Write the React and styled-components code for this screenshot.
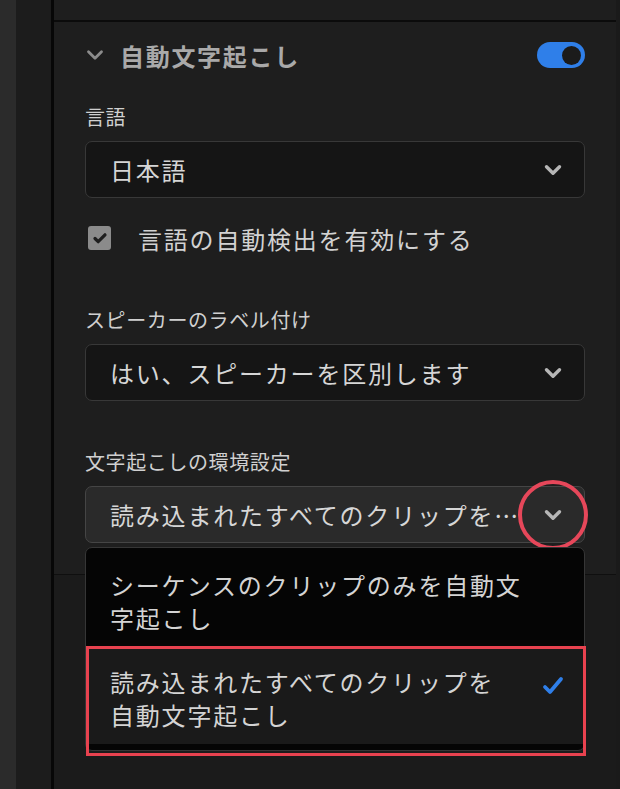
import React from 'react';
import styled, { createGlobalStyle } from 'styled-components';

const GlobalStyle = createGlobalStyle`
  html, body {
    margin: 0;
    padding: 0;
    background: #1e1e1e;
  }
  body {
    font-family: "Noto Sans CJK JP", "Noto Sans", sans-serif;
    -webkit-font-smoothing: antialiased;
  }
`;

const Screen = styled.div`
  display: flex;
  width: 620px;
  height: 789px;
  overflow: hidden;
  background: #1e1e1e;
`;

const SideStrip = styled.div`
  width: 16px;
  background: #2b2b2b;
`;

const Gutter = styled.div`
  width: 35px;
  background: #1c1c1c;
`;

const Divider = styled.div`
  width: 3px;
  background: #070707;
`;

const Panel = styled.div`
  flex: 1;
  display: flex;
  flex-direction: column;
  border-right: 4px solid #1a1a1a;
`;

const TopBand = styled.div`
  height: 20px;
  background: #1e1e1e;
  border-bottom: 2px solid #0b0b0b;
`;

const Section = styled.section`
  position: relative;
  padding: 0 31px 31px 31px;
  background: #1e1e1e;
  border-bottom: 1px solid #0f0f0f;
`;

const Rest = styled.div`
  flex: 1;
  background: #1b1b1b;
`;

const Header = styled.div`
  display: flex;
  align-items: center;
  height: 66px;
`;

const Title = styled.h2`
  flex: 1;
  margin: 0 0 0 15px;
  font-size: 24px;
  font-weight: 700;
  letter-spacing: 1.7px;
  color: #a9a9a9;
`;

const Toggle = styled.div`
  display: flex;
  align-items: center;
  justify-content: flex-end;
  width: 48px;
  height: 26px;
  padding: 0 4px;
  box-sizing: border-box;
  border-radius: 13px;
  background: #2f7fe9;
  &::after {
    content: '';
    width: 19px;
    height: 19px;
    border-radius: 50%;
    background: #1b1b1b;
  }
`;

const Label = styled.div`
  margin-top: ${(props) => props.gap}px;
  font-size: 20px;
  line-height: 28px;
  letter-spacing: 0.6px;
  color: #d0d0d0;
`;

const SelectWrap = styled.div`
  position: relative;
  margin-top: 10px;
`;

const SelectBox = styled.div`
  display: flex;
  align-items: center;
  height: 57px;
  box-sizing: border-box;
  padding: 0 21px 0 24px;
  border: 1.5px solid ${(props) => (props.open ? '#454545' : '#383838')};
  border-radius: 7px;
  background: ${(props) => (props.open ? '#2a2a2a' : '#151515')};
`;

const SelectText = styled.span`
  flex: 1;
  font-size: 24px;
  letter-spacing: 1.8px;
  color: #d6d6d6;
  white-space: nowrap;
  overflow: hidden;
  text-overflow: ellipsis;
`;

const ChevronSlot = styled.span`
  position: relative;
  display: flex;
  align-items: center;
  justify-content: center;
  width: 20px;
  height: 20px;
`;

const Ring = styled.span`
  position: absolute;
  left: 50%;
  top: 50%;
  width: 70px;
  height: 70px;
  box-sizing: border-box;
  border: 4px solid #e6475a;
  border-radius: 50%;
  transform: translate(-50%, -50%);
`;

const CheckRow = styled.label`
  display: flex;
  align-items: center;
  height: 30px;
  margin-top: 25px;
  font-size: 24px;
  letter-spacing: 1.8px;
  color: #d2d2d2;
`;

const CheckBox = styled.span`
  display: flex;
  align-items: center;
  justify-content: center;
  width: 23px;
  height: 24px;
  margin: 0 27px 0 3px;
  border-radius: 3px;
  background: #8b8b8b;
`;

const Menu = styled.ul`
  position: absolute;
  top: calc(100% + 4px);
  left: 0;
  right: 0;
  z-index: 2;
  margin: 0;
  padding: 0 0 6px;
  list-style: none;
  background: #050505;
  border: 1px solid #363636;
  border-radius: 7px;
`;

const MenuItem = styled.li`
  position: relative;
  padding: ${(props) => (props.selected ? '17px 48px 13px 24px' : '20px 48px 14px 24px')};
  font-size: 24px;
  line-height: 33px;
  letter-spacing: 1.8px;
  color: #d4d4d4;
  white-space: pre-line;
  background: ${(props) => (props.selected ? '#1a1a1a' : 'transparent')};
  ${(props) =>
    props.selected &&
    `
    &::after {
      content: '';
      position: absolute;
      inset: -2px -2px -12px 0;
      border: 3px solid #e8424f;
      pointer-events: none;
    }
  `}
`;

const ItemCheck = styled.span`
  position: absolute;
  right: 20px;
  top: 22px;
`;

const Chevron = ({ color = '#b6b6b6', width = 3.4 }) => (
  <svg width="20" height="20" viewBox="0 0 20 20">
    <path
      d="M3.5 6.8l6.5 6.5 6.5-6.5"
      fill="none"
      stroke={color}
      strokeWidth={width}
      strokeLinecap="round"
      strokeLinejoin="round"
    />
  </svg>
);

const Select = ({ value, open, marked, children }) => (
  <SelectWrap>
    <SelectBox open={open}>
      <SelectText>{value}</SelectText>
      <ChevronSlot>
        <Chevron />
        {marked ? <Ring /> : null}
      </ChevronSlot>
    </SelectBox>
    {children}
  </SelectWrap>
);

const App = () => {
  return (
    <>
      <GlobalStyle />
      <Screen>
        <SideStrip />
        <Gutter />
        <Divider />
        <Panel>
          <TopBand />
          <Section>
            <Header>
              <Chevron color="#8c8c8c" width={2.8} />
              <Title>自動文字起こし</Title>
              <Toggle />
            </Header>

            <Label gap={15}>言語</Label>
            <Select value="日本語" />

            <CheckRow>
              <CheckBox>
                <svg width="16" height="16" viewBox="0 0 16 16">
                  <path
                    d="M3 8.5l3.2 3.2L13 4.8"
                    fill="none"
                    stroke="#1e1e1e"
                    strokeWidth="3.2"
                    strokeLinecap="round"
                    strokeLinejoin="round"
                  />
                </svg>
              </CheckBox>
              言語の自動検出を有効にする
            </CheckRow>

            <Label gap={53}>スピーカーのラベル付け</Label>
            <Select value="はい、スピーカーを区別します" />

            <Label gap={47}>文字起こしの環境設定</Label>
            <Select value="読み込まれたすべてのクリップを…" open marked>
              <Menu>
                <MenuItem>{'シーケンスのクリップのみを自動文\n字起こし'}</MenuItem>
                <MenuItem selected>
                  {'読み込まれたすべてのクリップを\n自動文字起こし'}
                  <ItemCheck>
                    <svg width="22" height="22" viewBox="0 0 22 22">
                      <path
                        d="M3 12l5 5L19 4"
                        fill="none"
                        stroke="#2f7fe9"
                        strokeWidth="3.8"
                        strokeLinecap="round"
                        strokeLinejoin="round"
                      />
                    </svg>
                  </ItemCheck>
                </MenuItem>
              </Menu>
            </Select>
          </Section>
          <Rest />
        </Panel>
      </Screen>
    </>
  );
};

export default App;
